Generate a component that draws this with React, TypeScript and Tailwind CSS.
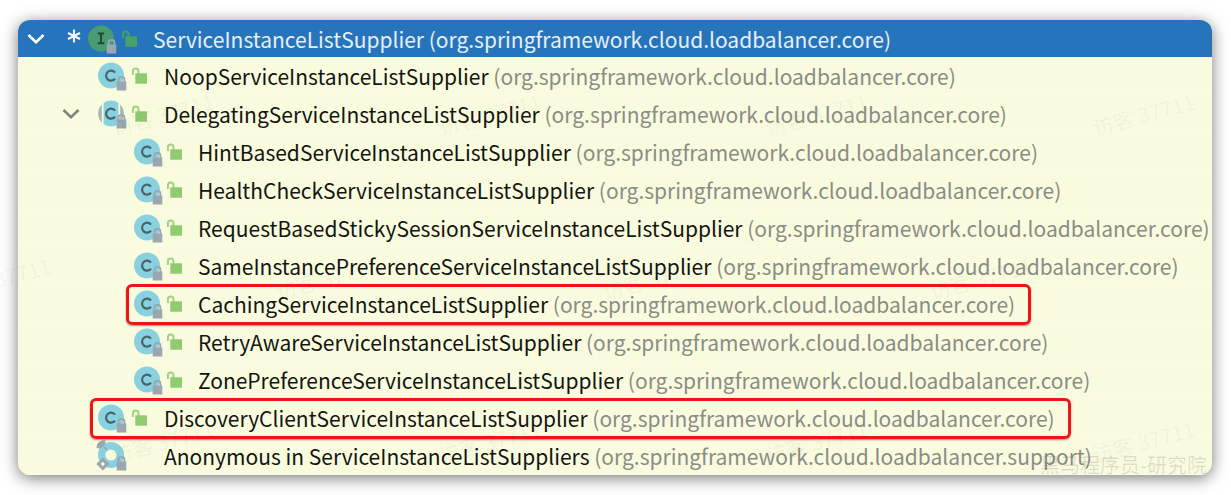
type Kind = 'interface' | 'class' | 'abstract' | 'anonymous';

interface TreeItem {
  name: string;
  pkg: string;
  kind: Kind;
  level: number;
  expandable?: boolean;
  boxed?: boolean;
}

const CORE = '(org.springframework.cloud.loadbalancer.core)';
const SUPPORT = '(org.springframework.cloud.loadbalancer.support)';

const items: TreeItem[] = [
  { name: 'NoopServiceInstanceListSupplier', pkg: CORE, kind: 'class', level: 1 },
  { name: 'DelegatingServiceInstanceListSupplier', pkg: CORE, kind: 'abstract', level: 1, expandable: true },
  { name: 'HintBasedServiceInstanceListSupplier', pkg: CORE, kind: 'class', level: 2 },
  { name: 'HealthCheckServiceInstanceListSupplier', pkg: CORE, kind: 'class', level: 2 },
  { name: 'RequestBasedStickySessionServiceInstanceListSupplier', pkg: CORE, kind: 'class', level: 2 },
  { name: 'SameInstancePreferenceServiceInstanceListSupplier', pkg: CORE, kind: 'class', level: 2 },
  { name: 'CachingServiceInstanceListSupplier', pkg: CORE, kind: 'class', level: 2, boxed: true },
  { name: 'RetryAwareServiceInstanceListSupplier', pkg: CORE, kind: 'class', level: 2 },
  { name: 'ZonePreferenceServiceInstanceListSupplier', pkg: CORE, kind: 'class', level: 2 },
  { name: 'DiscoveryClientServiceInstanceListSupplier', pkg: CORE, kind: 'class', level: 1, boxed: true },
  { name: 'Anonymous in ServiceInstanceListSuppliers', pkg: SUPPORT, kind: 'anonymous', level: 1 },
];

const Chevron = () => (
  <svg width="18" height="12" viewBox="0 0 18 12" fill="none" stroke="currentColor" strokeWidth="2.6">
    <path d="M1.5 2L9 9.3L16.5 2" />
  </svg>
);

const KindIcon = ({ kind }: { kind: Kind }) => (
  <svg width="30" height="30" viewBox="0 0 30 30" className="shrink-0 overflow-visible">
    {kind === 'interface' && (
      <>
        <circle cx="13" cy="14.5" r="13" fill="#499C70" />
        <path d="M9.8 9.5H16.2M9.8 19.3H16.2M13 9.5V19.3" stroke="#254739" strokeWidth="2" fill="none" />
      </>
    )}
    {kind === 'class' && <circle cx="13" cy="14.5" r="13" fill="#8AD1DF" />}
    {kind === 'abstract' && (
      <>
        <path d="M3.8 5.5A13 13 0 0 0 3.8 23.5zM22.2 5.5A13 13 0 0 1 22.2 23.5z" fill="#AAB5B9" />
        <path d="M5.6 3.9Q8.5 1.5 13 1.5T20.4 3.9V25.1Q17.5 27.5 13 27.5T5.6 25.1z" fill="#8AD1DF" />
      </>
    )}
    {(kind === 'class' || kind === 'abstract') && (
      <path d="M17 11.6A5 5 0 1 0 17 17.8" stroke="#46656D" strokeWidth="2.2" fill="none" />
    )}
    {kind === 'anonymous' && (
      <>
        <circle cx="13" cy="14" r="9.3" fill="none" stroke="#8AD1DF" strokeWidth="7.4" />
        <path d="M-1.5 7Q-1.5 2 2 .5Q5 -1.5 7.5 -.8Q7.5 4 4 6.5Q1.5 8 -1.5 7z" fill="#9AA7B0" />
        <path d="M5.5 7L9.5 10L7.5 5.5z" fill="#9AA7B0" />
        <path d="M4.8 16.5L11.3 23L4.8 29.5L-1.7 23z" fill="#9AA7B0" />
        <path d="M4.8 20.7L7 23L4.8 25.3L2.6 23z" fill="#F9FBDF" />
      </>
    )}
    <path d="M20.6 21V18.3Q20.6 16 23.5 16T26.4 18.3V21" fill="none" stroke="#9AA7B0" strokeWidth="1.8" />
    <rect x="18.7" y="20.5" width="9.6" height="9" fill="#9AA7B0" />
  </svg>
);

const OpenLock = ({ color }: { color: string }) => (
  <svg width="17" height="18" viewBox="0 0 17 18" className="shrink-0">
    <path d="M1.9 8V4.5Q1.9 1.5 4.7 1.5T7.5 4.5V8" fill="none" stroke={color} strokeWidth="2" opacity=".85" />
    <rect x="4.3" y="6.3" width="11.7" height="10.4" fill={color} />
  </svg>
);

const WatermarkRow = ({ className }: { className: string }) => (
  <div className={`absolute flex ${className}`}>
    {[0, 1, 2, 3].map((i) => (
      <span key={i} className="w-[327px] shrink-0">
        <span className="inline-block -rotate-15 whitespace-nowrap">访客 37711</span>
      </span>
    ))}
  </div>
);

const Row = ({ item }: { item: TreeItem }) => (
  <li
    role="treeitem"
    aria-level={item.level + 1}
    className="flex h-[38px] items-center border-b border-b-[#fcfde9]"
  >
    <div className={`flex shrink-0 justify-end ${item.level === 1 ? 'w-20 pr-[18px]' : 'w-[116px]'}`}>
      {item.expandable && (
        <button type="button" aria-label="Collapse" className="text-[#818579]">
          <Chevron />
        </button>
      )}
    </div>
    <div className="relative flex h-full items-center">
      <KindIcon kind={item.kind} />
      <span className={`flex shrink-0 ${item.level === 1 ? 'w-9 pl-[3px]' : 'w-[34px] pl-[2px]'}`}>
        {item.kind !== 'anonymous' && <OpenLock color="#90CB72" />}
      </span>
      <span className="whitespace-nowrap">
        {item.name} <span className="text-[#8b8c85]">{item.pkg}</span>
      </span>
      {item.boxed && (
        <span className="absolute -top-px -bottom-[3px] -left-2 -right-4 rounded-md border-3 border-[#ee1515] shadow-[0_1px_2px_#0006]" />
      )}
    </div>
  </li>
);

const App = () => {
  return (
    <main className="relative overflow-hidden bg-white pt-5 pr-[19px] pb-5 pl-[18px] font-['Noto_Sans_CJK_SC',sans-serif] text-[21px] leading-[36px] text-[#141511]">
      <ul
        role="tree"
        className="overflow-hidden rounded-xl bg-[#f9fbdf] shadow-[0_3px_16px_#0008]"
      >
        <li role="treeitem" aria-level={1} className="flex h-[37px] items-center bg-[#2675bc] text-[#e6eff7]">
          <button type="button" aria-label="Collapse" className="ml-[9px] text-white">
            <Chevron />
          </button>
          <svg width="14" height="20" viewBox="0 0 14 20" className="ml-[22px] mr-[7px] shrink-0" stroke="#f2f7fb" strokeWidth="2.1">
            <path d="M7 .5V13.5M1 4L13 10M13 4L1 10" />
          </svg>
          <KindIcon kind="interface" />
          <span className="flex w-[35px] shrink-0 pl-[3px]">
            <OpenLock color="#4AA366" />
          </span>
          <span className="whitespace-nowrap">ServiceInstanceListSupplier {CORE}</span>
        </li>
        {items.map((item) => (
          <Row key={item.name} item={item} />
        ))}
      </ul>

      <div aria-hidden="true" className="pointer-events-none text-[#0000000d]">
        <WatermarkRow className="left-[110px] top-[96px]" />
        <WatermarkRow className="-left-[53px] top-[260px]" />
        <WatermarkRow className="left-[110px] top-[423px]" />
      </div>
      <p className="absolute right-[24px] bottom-[12px] text-[20px] text-[#00002020]">黑马程序员-研究院</p>
    </main>
  );
};

export default App;
